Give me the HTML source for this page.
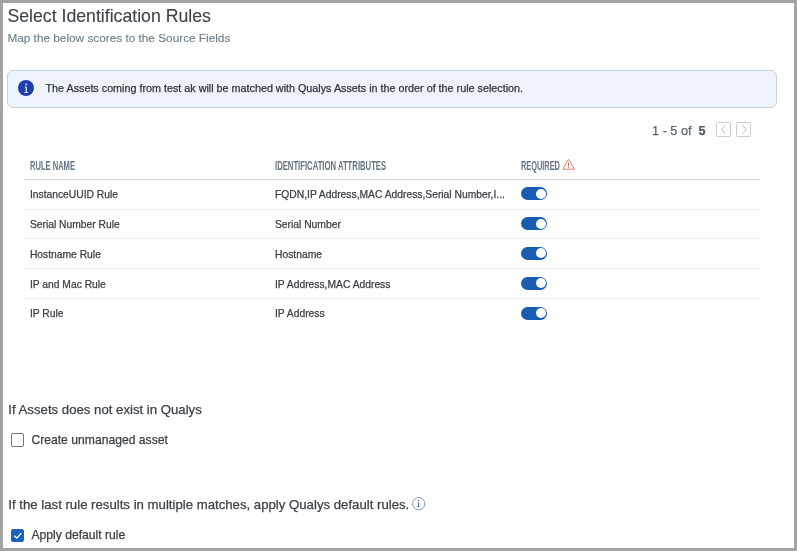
<!DOCTYPE html>
<html><head><meta charset="utf-8">
<style>
html,body{margin:0;padding:0;}
body{width:797px;height:551px;overflow:hidden;background:#a3a3a3;position:relative;font-family:"Liberation Sans",sans-serif;}
#page{position:absolute;left:3px;top:3px;width:791px;height:545px;background:#fff;}
.t{position:absolute;white-space:nowrap;line-height:1;-webkit-text-stroke:0.25px currentColor;}
.title{left:7.4px;top:7.5px;font-size:17.7px;color:#3c4248;-webkit-text-stroke:0.1px currentColor;}
.sub{left:7.4px;top:33.1px;font-size:11.8px;color:#6a7b8a;-webkit-text-stroke:0.1px currentColor;}
.banner{position:absolute;left:7px;top:70px;width:768px;height:36px;border:1px solid #c8d2df;border-radius:6px;background:#eef3fa;box-sizing:content-box;}
.bicon{position:absolute;left:18.1px;top:79.9px;width:16.3px;height:16.3px;border-radius:50%;background:#1e40ad;}
.btext{left:45.5px;top:83.2px;font-size:10.78px;color:#2f353b;}
.pag{left:652.1px;top:125.3px;font-size:12.65px;color:#5a646d;}
.pag b{color:#4d5963;}
.pbtn{position:absolute;top:122px;width:13px;height:13px;border:1px solid #cbcdd0;border-radius:1.5px;background:#fff;}
.hdr{position:absolute;top:159.8px;font-size:12px;color:#637486;transform-origin:0 0;transform:scaleX(0.63);white-space:nowrap;line-height:1;font-weight:bold;}
.hline{position:absolute;left:24px;width:736px;height:1px;background:#d8dbde;}
.rline{position:absolute;left:24px;width:736px;height:1px;background:#eceef0;}
.cell{position:absolute;white-space:nowrap;line-height:1;-webkit-text-stroke:0.25px currentColor;font-size:10.3px;color:#3a3f44;}
.tog{position:absolute;left:521px;width:26px;height:13px;border-radius:7px;background:#1b5cb3;}
.tog::after{content:"";position:absolute;right:1.5px;top:1.5px;width:10px;height:10px;border-radius:50%;background:#fff;}
.sec{font-size:13.2px;color:#3c4248;}
.cb{position:absolute;left:10.8px;width:11.4px;height:11.4px;border:1px solid #6f767d;border-radius:2px;background:#fff;}
.cbl{font-size:12.16px;color:#3a3f44;}
</style></head>
<body>
<div id="wrap" style="position:absolute;left:0;top:0;width:797px;height:551px;will-change:transform">
<div id="page"></div>
<div class="t title">Select Identification Rules</div>
<div class="t sub">Map the below scores to the Source Fields</div>

<div class="banner"></div>
<div class="bicon"><svg width="16.3" height="16.3" viewBox="0 0 16.3 16.3" style="position:absolute;left:0;top:0"><circle cx="8.1" cy="4.4" r="0.9" fill="#fff" fill-opacity="0.9"/><path d="M6.8 6.6H8.85V12.1H9.9V12.9H6.5V12.1H7.6V7.4H6.8Z" fill="#fff" fill-opacity="0.9"/></svg></div>
<div class="t btext">The Assets coming from test ak will be matched with Qualys Assets in the order of the rule selection.</div>

<div class="t pag">1 - 5 of&nbsp; <b>5</b></div>
<div class="pbtn" style="left:716px"><svg width="13" height="13" viewBox="0 0 13 13" style="position:absolute;left:0;top:0"><path d="M8 2.5L4.5 6.5L8 10.5" fill="none" stroke="#b3b6b9" stroke-width="1"/></svg></div>
<div class="pbtn" style="left:736px"><svg width="13" height="13" viewBox="0 0 13 13" style="position:absolute;left:0;top:0"><path d="M5.8 2.5L9.3 6.5L5.8 10.5" fill="none" stroke="#b3b6b9" stroke-width="1"/></svg></div>

<div class="hdr" style="left:30px">RULE NAME</div>
<div class="hdr" style="left:275.3px;transform:scaleX(0.642)">IDENTIFICATION ATTRIBUTES</div>
<div class="hdr" style="left:521px;transform:scaleX(0.615)">REQUIRED</div>
<svg style="position:absolute;left:562px;top:158px" width="14" height="13" viewBox="0 0 14 13"><path d="M6.5 1.3L12.6 11.2H0.9Z" fill="none" stroke="#dc7a6c" stroke-width="0.95" stroke-linejoin="round"/><path d="M6.5 4.6v3.6" stroke="#d46a5c" stroke-width="1"/><circle cx="6.5" cy="9.5" r="0.6" fill="#d46a5c"/></svg>
<div class="hline" style="top:179px"></div>

<div class="cell" style="left:29.9px;top:190.2px">InstanceUUID Rule</div>
<div class="cell" style="left:275px;top:190.2px">FQDN,IP Address,MAC Address,Serial Number,I...</div>
<div class="tog" style="top:187.3px"></div>
<div class="rline" style="top:208.9px"></div>

<div class="cell" style="left:29.9px;top:220px">Serial Number Rule</div>
<div class="cell" style="left:275px;top:220px">Serial Number</div>
<div class="tog" style="top:217.1px"></div>
<div class="rline" style="top:238.3px"></div>

<div class="cell" style="left:29.9px;top:249.8px">Hostname Rule</div>
<div class="cell" style="left:275px;top:249.8px">Hostname</div>
<div class="tog" style="top:246.9px"></div>
<div class="rline" style="top:268.1px"></div>

<div class="cell" style="left:29.9px;top:279.5px">IP and Mac Rule</div>
<div class="cell" style="left:275px;top:279.5px">IP Address,MAC Address</div>
<div class="tog" style="top:276.7px"></div>
<div class="rline" style="top:298.1px"></div>

<div class="cell" style="left:29.9px;top:309.3px">IP Rule</div>
<div class="cell" style="left:275px;top:309.3px">IP Address</div>
<div class="tog" style="top:306.5px"></div>

<div class="t sec" style="left:8.3px;top:402.8px">If Assets does not exist in Qualys</div>
<div class="cb" style="top:433.3px"></div>
<div class="t cbl" style="left:31.4px;top:434.3px">Create unmanaged asset</div>

<div class="t sec" style="left:8.3px;top:497.9px">If the last rule results in multiple matches, apply Qualys default rules.</div>
<svg style="position:absolute;left:411.6px;top:496.9px" width="14" height="14" viewBox="0 0 14 14"><circle cx="6.7" cy="6.7" r="6.1" fill="none" stroke="#6b8fc0" stroke-width="0.9"/><circle cx="6.6" cy="3.6" r="0.7" fill="#3f629a"/><path d="M5.7 5.6H7.1V9.5H7.9V10.1H5.2V9.5H6.1V6.2H5.7Z" fill="#3f629a"/></svg>
<div class="cb" style="top:528.5px;background:#1a62bf;border-color:#1a62bf;"><svg width="11.4" height="11.4" viewBox="0 0 11.4 11.4" style="position:absolute;left:0;top:0"><path d="M2.2 5.7L4.9 8.1L9.3 3.1" fill="none" stroke="#fff" stroke-width="1.35"/></svg></div>
<div class="t cbl" style="left:31.4px;top:529.3px">Apply default rule</div>
</div>
</body></html>
